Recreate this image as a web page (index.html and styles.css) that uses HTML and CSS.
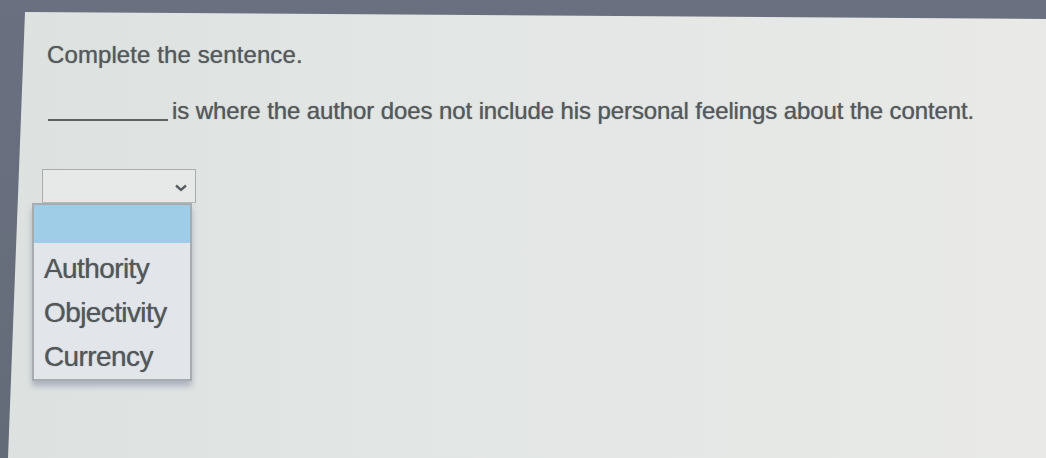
FILE: index.html
```html
<!DOCTYPE html>
<html>
<head>
<meta charset="utf-8">
<link rel="stylesheet" href="styles.css">
</head>
<body>
<div class="panel">
  <p class="prompt">Complete the sentence.</p>
  <p class="sentence"><span class="blank"></span><span class="rest">is where the author does not include his personal feelings about the content.</span></p>
  <div class="select">
    <div class="select-box">
      <svg class="chev" width="12" height="8" viewBox="0 0 12 8"><path d="M1 1.5 L6 6 L11 1.5" fill="none" stroke="#5a5e62" stroke-width="2.4"/></svg>
    </div>
    <div class="menu">
      <div class="opt selected"></div>
      <div class="opt">Authority</div>
      <div class="opt">Objectivity</div>
      <div class="opt">Currency</div>
    </div>
  </div>
</div>
</body>
</html>
```
FILE: styles.css
```css
html, body {
  margin: 0;
  padding: 0;
}
body {
  width: 1046px;
  height: 458px;
  overflow: hidden;
  background: linear-gradient(180deg, #6a7080 0%, #646b78 100%);
  font-family: "Liberation Sans", Arial, sans-serif;
}
.panel {
  width: 1046px;
  height: 458px;
  box-sizing: border-box;
  clip-path: polygon(25px 12px, 1046px 19px, 1046px 458px, 8px 458px);
  background: linear-gradient(90deg, #dde2e0 0%, #e2e6e4 40%, #e9eae8 100%);
  color: #55595c;
  padding-left: 47px;
  padding-top: 1px;
}
.prompt {
  margin: 0;
  padding-top: 40px;
  font-size: 24px;
  letter-spacing: 0.1px;
  line-height: 28px;
  text-shadow: 0 0 1px rgba(70, 74, 78, 0.7);
}
.sentence {
  margin: 0;
  padding-top: 28px;
  display: flex;
  align-items: flex-end;
  font-size: 24px;
  letter-spacing: -0.1px;
  line-height: 28px;
  text-shadow: 0 0 1px rgba(70, 74, 78, 0.7);
}
.blank {
  display: inline-block;
  width: 120px;
  border-bottom: 2px solid #5e6265;
  margin: 0 4px 4px 1px;
}
.select {
  margin-top: 44px;
  margin-left: -15px;
  width: 164px;
}
.select-box {
  margin-left: 10px;
  width: 154px;
  height: 34px;
  box-sizing: border-box;
  border: 1px solid #a9adb0;
  border-bottom-color: #b8bcbe;
  background: #e6e9e8;
  display: flex;
  justify-content: flex-end;
  align-items: center;
  padding-right: 8px;
}
.chev {
  margin-top: 4px;
}
.menu {
  width: 160px;
  box-sizing: border-box;
  border: 2px solid #a7acb1;
  background: #e2e6ea;
  box-shadow: 0 5px 6px rgba(110, 115, 150, 0.45);
}
.opt {
  font-size: 28px;
  letter-spacing: -0.6px;
  line-height: 44px;
  height: 44px;
  padding-left: 10px;
  color: #53575a;
  text-shadow: 0 0 1px rgba(70, 74, 78, 0.7);
}
.opt.selected {
  background: #9fcde7;
  height: 38px;
  margin: 0 0 4px 0;
}
```
